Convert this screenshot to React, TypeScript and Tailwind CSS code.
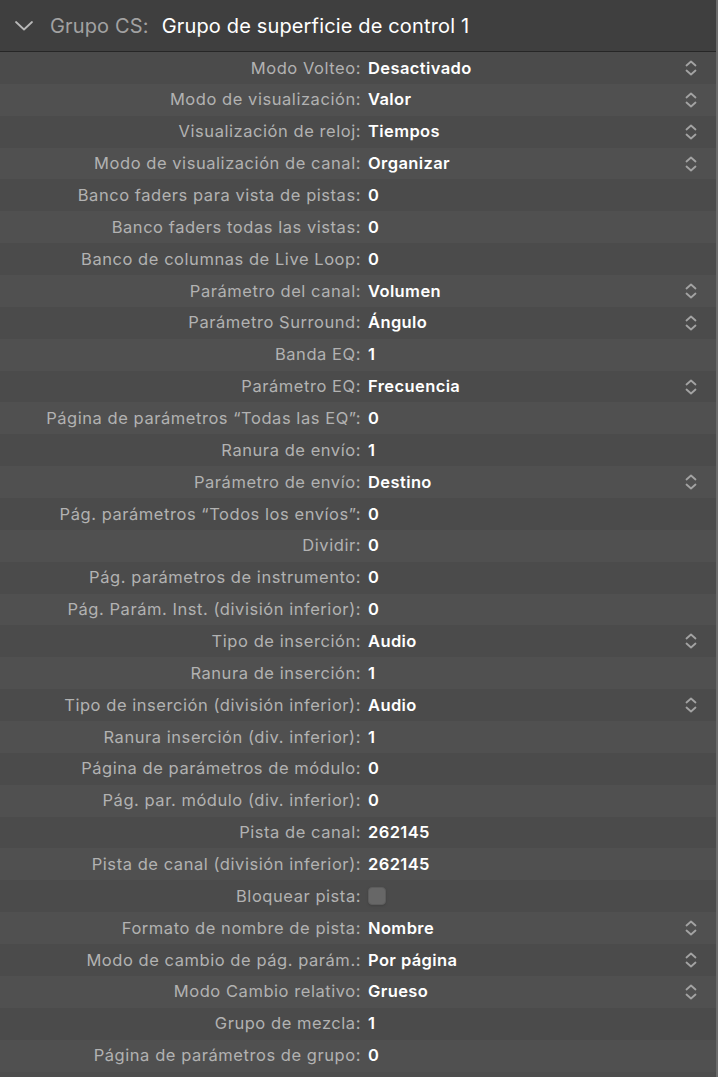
type Row = { label: string; value?: string; select?: boolean; checkbox?: boolean };

const rows: Row[] = [
  { label: "Modo Volteo:", value: "Desactivado", select: true },
  { label: "Modo de visualización:", value: "Valor", select: true },
  { label: "Visualización de reloj:", value: "Tiempos", select: true },
  { label: "Modo de visualización de canal:", value: "Organizar", select: true },
  { label: "Banco faders para vista de pistas:", value: "0" },
  { label: "Banco faders todas las vistas:", value: "0" },
  { label: "Banco de columnas de Live Loop:", value: "0" },
  { label: "Parámetro del canal:", value: "Volumen", select: true },
  { label: "Parámetro Surround:", value: "Ángulo", select: true },
  { label: "Banda EQ:", value: "1" },
  { label: "Parámetro EQ:", value: "Frecuencia", select: true },
  { label: "Página de parámetros “Todas las EQ”:", value: "0" },
  { label: "Ranura de envío:", value: "1" },
  { label: "Parámetro de envío:", value: "Destino", select: true },
  { label: "Pág. parámetros “Todos los envíos”:", value: "0" },
  { label: "Dividir:", value: "0" },
  { label: "Pág. parámetros de instrumento:", value: "0" },
  { label: "Pág. Parám. Inst. (división inferior):", value: "0" },
  { label: "Tipo de inserción:", value: "Audio", select: true },
  { label: "Ranura de inserción:", value: "1" },
  { label: "Tipo de inserción (división inferior):", value: "Audio", select: true },
  { label: "Ranura inserción (div. inferior):", value: "1" },
  { label: "Página de parámetros de módulo:", value: "0" },
  { label: "Pág. par. módulo (div. inferior):", value: "0" },
  { label: "Pista de canal:", value: "262145" },
  { label: "Pista de canal (división inferior):", value: "262145" },
  { label: "Bloquear pista:", checkbox: true },
  { label: "Formato de nombre de pista:", value: "Nombre", select: true },
  { label: "Modo de cambio de pág. parám.:", value: "Por página", select: true },
  { label: "Modo Cambio relativo:", value: "Grueso", select: true },
  { label: "Grupo de mezcla:", value: "1" },
  { label: "Página de parámetros de grupo:", value: "0" },
];

const UpDown = () => (
  <svg width="12" height="18" viewBox="0 0 12 18" fill="none" stroke="#a3a3a3" strokeWidth="1.8" strokeLinecap="round" strokeLinejoin="round">
    <path d="M1.5 6.5 L6 2.5 L10.5 6.5" />
    <path d="M1.5 11.5 L6 15.5 L10.5 11.5" />
  </svg>
);

// disclosure triangle of the group header
const Disclosure = () => (
  <svg width="20" height="12" viewBox="0 0 20 12" fill="none" stroke="#b8b8b8" strokeWidth="1.8" strokeLinecap="round" strokeLinejoin="round">
    <path d="M2 2 L10 9.5 L18 2" />
  </svg>
);

export default function App() {
  return (
    <div
      className="w-[718px] h-[1077px] overflow-hidden bg-[#4d4d4d] border-r-2 border-[#6b6b6b]"
      style={{ fontFamily: "Inter, 'Noto Sans', sans-serif" }}
    >
      <div className="h-[51px] bg-[#3f3f3f] flex items-center pl-[14px]">
        <Disclosure />
        <span className="ml-[16px] text-[20px] tracking-[0.15px] text-[#a2a2a2]">Grupo CS:</span>
        <span className="ml-[13px] text-[20px] tracking-[0.15px] text-white">Grupo de superficie de control 1</span>
      </div>
      <div className="h-px bg-[#262626]" />
      {rows.map((r, i) => (
        <div
          key={r.label}
          className={`h-[31.87px] flex items-center ${i % 2 === 0 ? "bg-[#4b4b4b]" : "bg-[#505050]"}`}
        >
          <div className="w-[361px] text-right text-[16.5px] tracking-[0.55px] text-[#b2b2b2] whitespace-nowrap">{r.label}</div>
          <div className="ml-[7px] flex-1 flex items-center">
            {r.checkbox ? (
              <div className="w-[18px] h-[18px] rounded-[4px] bg-[#676767] border border-[#5c5c5c] shadow-sm" />
            ) : (
              <span className="text-[16.5px] tracking-[0.4px] font-semibold text-white">{r.value}</span>
            )}
          </div>
          {r.select && (
            <div className="w-[46px] flex justify-center pr-[4px]">
              <UpDown />
            </div>
          )}
        </div>
      ))}
    </div>
  );
}
